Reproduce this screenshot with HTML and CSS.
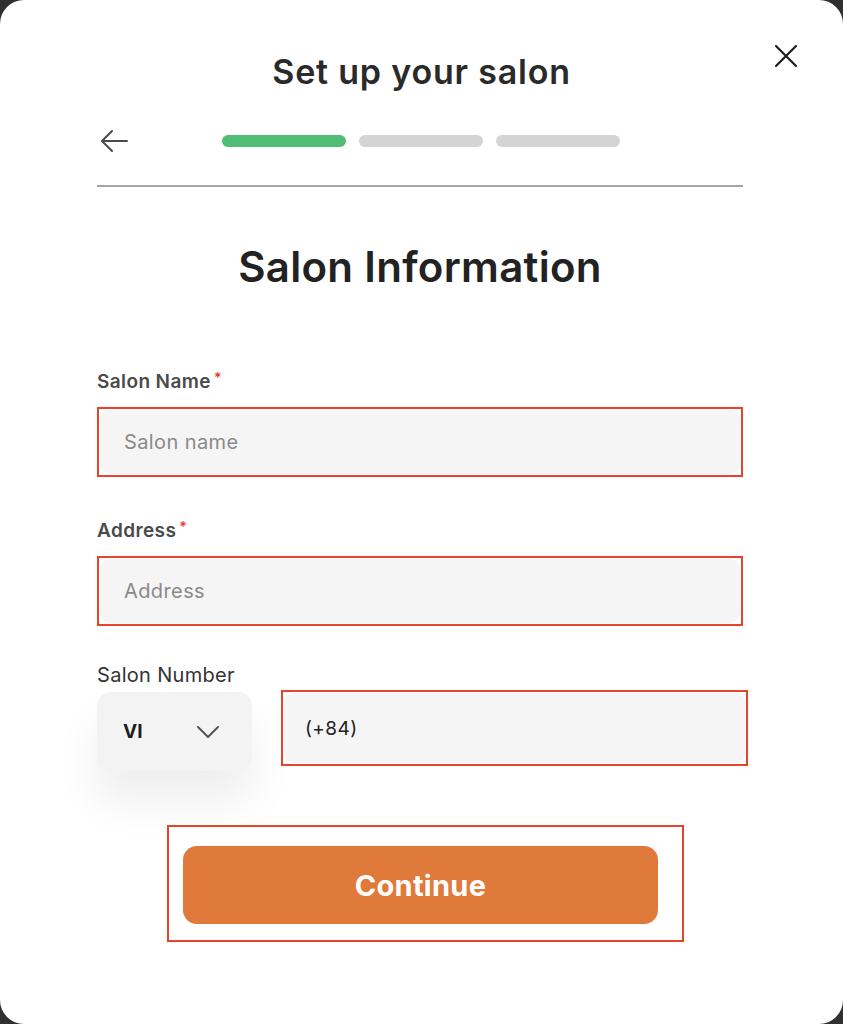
FILE: index.html
```html
<!DOCTYPE html>
<html lang="en">
<head>
  <meta charset="UTF-8" />
  <meta name="viewport" content="width=device-width, initial-scale=1.0"/>
  <title>Set up your salon</title>
  <link rel="stylesheet" href="styles.css">
</head>
<body>
  <div class="modal">
    <button class="close" aria-label="Close">
      <svg width="24" height="24" viewBox="0 0 24 24"><path d="M2 2L22 22M22 2L2 22" stroke="#1e1e1e" stroke-width="2.2" stroke-linecap="round"/></svg>
    </button>

    <h1 class="title">Set up your salon</h1>

    <div class="content">
      <div class="steps">
        <button class="back" aria-label="Back">
          <svg width="28" height="24" viewBox="0 0 28 24"><path d="M27 12H3M12 2L2 12L12 22" fill="none" stroke="#4a4a4a" stroke-width="2" stroke-linecap="round" stroke-linejoin="round"/></svg>
        </button>
        <div class="bars">
          <span class="bar active"></span>
          <span class="bar"></span>
          <span class="bar"></span>
        </div>
      </div>
      <div class="divider"></div>

      <h2 class="heading">Salon Information</h2>

      <form id="salonForm">
        <label class="label req">Salon Name<span>*</span></label>
        <div class="field">
          <input type="text" placeholder="Salon name" />
        </div>

        <label class="label req second">Address<span>*</span></label>
        <div class="field">
          <input type="text" placeholder="Address" />
        </div>

        <label class="label third">Salon Number</label>
        <div class="phone-row">
          <div class="country">
            <span>VI</span>
            <svg width="24" height="14" viewBox="0 0 24 14"><path d="M2 2L12 12L22 2" fill="none" stroke="#555" stroke-width="2" stroke-linecap="round" stroke-linejoin="round"/></svg>
          </div>
          <div class="field phone">
            <input type="text" value="(+84)" />
          </div>
        </div>

        <div class="submit-wrap">
          <button type="submit" class="continue">Continue</button>
        </div>
      </form>
    </div>
  </div>
</body>
</html>
```

FILE: styles.css
```css
* {
  margin: 0;
  padding: 0;
  box-sizing: border-box;
}
body {
  background: #303030;
  font-family: Inter, "Noto Sans", sans-serif;
  color: #2b2b2b;
}
.modal {
  position: relative;
  width: 843px;
  height: 1024px;
  background: #fff;
  border-radius: 24px;
  overflow: hidden;
}
button {
  border: none;
  background: none;
  font-family: inherit;
  cursor: pointer;
}
.close {
  position: absolute;
  top: 44px;
  left: 774px;
  width: 24px;
  height: 24px;
}
.title {
  padding-top: 52px;
  font-size: 34px;
  line-height: 40px;
  font-weight: 600;
  text-align: center;
  color: #2a2a2a;
  letter-spacing: 0.8px;
}
.content {
  width: 646px;
  margin-left: 97px;
}
.steps {
  display: flex;
  align-items: center;
  height: 24px;
  margin-top: 37px;
}
.back {
  width: 28px;
  height: 24px;
  margin-left: 3px;
}
.bars {
  display: flex;
  gap: 13px;
  margin-left: 94px;
}
.bar {
  width: 124px;
  height: 12px;
  border-radius: 6px;
  background: #d4d4d4;
}
.bar.active {
  background: #52bd76;
}
.divider {
  height: 2px;
  background: #a5a5a5;
  margin-top: 32px;
}
.heading {
  margin-top: 56px;
  font-size: 42px;
  line-height: 48px;
  font-weight: 600;
  text-align: center;
  color: #222;
  letter-spacing: 0.3px;
}
.label {
  display: block;
  margin-top: 79px;
  font-size: 19px;
  line-height: 24px;
  font-weight: 600;
  color: #4a4a4a;
  margin-bottom: 13px;
  letter-spacing: 0.4px;
}
.label span {
  color: #e5392b;
  font-size: 14px;
  vertical-align: top;
  margin-left: 3px;
  line-height: 16px;
}
.label.second {
  margin-top: 42px;
}
.label.third {
  margin-top: 37px;
  margin-bottom: 3px;
  font-weight: 400;
  color: #333;
  font-size: 20px;
  letter-spacing: 0.3px;
}
.field {
  height: 70px;
  border: 2px solid #e8442c;
  padding: 1px;
}
.field input {
  width: 100%;
  height: 100%;
  border: none;
  outline: none;
  border-radius: 10px;
  background: #f5f5f5;
  padding: 0 24px;
  font-family: inherit;
  font-size: 20px;
  letter-spacing: 0.4px;
  color: #222;
}
.field input::placeholder {
  color: #8a8a8a;
}
.phone-row {
  display: flex;
  align-items: flex-start;
  gap: 29px;
}
.country {
  flex-shrink: 0;
  width: 155px;
  height: 79px;
  margin-top: 2px;
  border-radius: 14px;
  background: #f3f3f3;
  box-shadow: 0 30px 45px rgba(0, 0, 0, 0.07);
  display: flex;
  align-items: center;
  justify-content: space-between;
  padding: 0 32px 0 26px;
  font-size: 19px;
  font-weight: 700;
  color: #1e1e1e;
}
.field.phone {
  flex-shrink: 0;
  width: 467px;
  height: 76px;
}
.field.phone input {
  padding-left: 21px;
  font-size: 19px;
}
.submit-wrap {
  width: 517px;
  margin: 54px 0 0 70px;
  border: 2px solid #e8442c;
  padding: 19px 24px 16px 14px;
}
.continue {
  width: 475px;
  height: 78px;
  border-radius: 14px;
  background: #df7a3a;
  color: #fff;
  font-size: 29px;
  font-weight: 700;
  letter-spacing: 0.3px;
}
```
